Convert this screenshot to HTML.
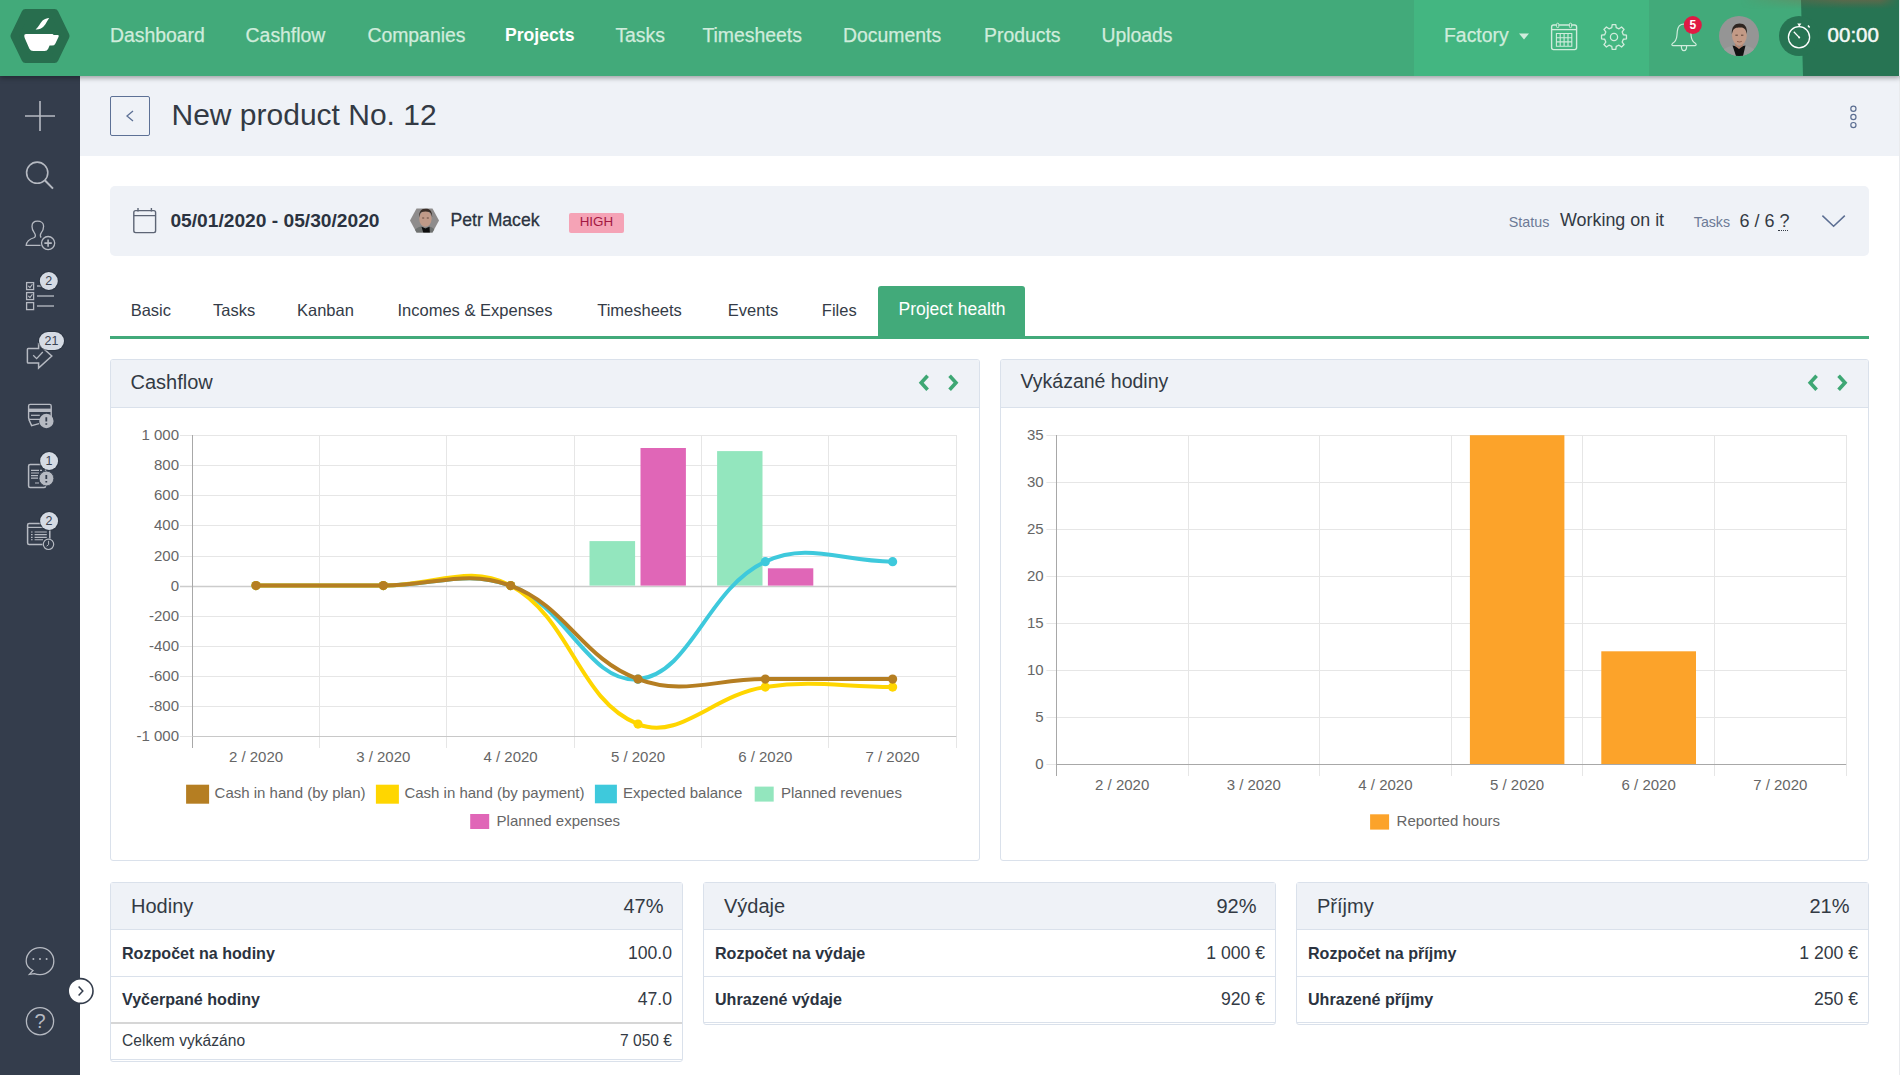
<!DOCTYPE html>
<html><head><meta charset="utf-8"><title>New product No. 12</title>
<style>
*{margin:0;padding:0;box-sizing:border-box}
html,body{width:1900px;height:1075px;overflow:hidden;background:#fff}
body{position:relative;font-family:"Liberation Sans", sans-serif}
.t{position:absolute;white-space:nowrap;line-height:1}
svg{display:block}
</style></head><body>
<div style="position:absolute;left:80px;top:76px;width:1820px;height:80px;background:#eff2f7"></div>
<div style="position:absolute;left:1899px;top:76px;width:1px;height:999px;background:#e9ebee"></div>
<div style="position:absolute;left:0px;top:76px;width:80px;height:999px;background:#343d4c"></div>
<svg style="position:absolute;left:0px;top:0px;" width="80" height="1075" viewBox="0 0 80 1075"><path d="M25,116H55M40,101V131" stroke="#b6bac2" stroke-width="1.6" fill="none"/><circle cx="37.2" cy="172.7" r="10.6" stroke="#b6bac2" stroke-width="1.6" fill="none"/><path d="M44.8,180.3L53,188.6" stroke="#b6bac2" stroke-width="2" fill="none"/><path d="M40.5,245.3H26.2C26.5,241 29.5,239 34.5,237.5C35.5,236.5 35.4,234.2 34.2,232.6C32.6,230.6 32,228.8 32,226.5C32,223 34.5,221.2 37.5,221.2C40.8,221.2 43.6,223 43.6,226.2C43.6,228.5 43,230.6 41.2,232.8C40.3,234 40.3,236.3 41,237.6" stroke="#b6bac2" stroke-width="1.3" fill="none"/><circle cx="48.1" cy="243.1" r="6.6" stroke="#b6bac2" stroke-width="1.3" fill="none"/><path d="M44.4,243.1H51.8M48.1,239.4V246.8" stroke="#b6bac2" stroke-width="1.6"/><rect x="26.6" y="282.6" width="7" height="7" stroke="#b6bac2" stroke-width="1.3" fill="none"/><rect x="26.6" y="292.6" width="7" height="7" stroke="#b6bac2" stroke-width="1.3" fill="none"/><rect x="26.6" y="302.6" width="7" height="7" stroke="#b6bac2" stroke-width="1.3" fill="none"/><path d="M28.3,285.8L30,287.6L32.4,284.3M28.3,295.8L30,297.6L32.4,294.3" stroke="#b6bac2" stroke-width="1.1" fill="none"/><path d="M37,286H54M37,296H54M37,306H54" stroke="#8a909a" stroke-width="1.8"/><path d="M38.6,344.2V348.6H28.2Q27.4,348.6 27.4,349.4V362.3Q27.4,363.1 28.2,363.1H38.6V368L51.8,356Z" stroke="#b6bac2" stroke-width="1.5" fill="none" stroke-linejoin="miter"/><path d="M33.2,355.3L36.6,358.6L42.8,352" stroke="#b6bac2" stroke-width="1.3" fill="none"/><rect x="28.6" y="404.4" width="22.6" height="15" rx="1.5" stroke="#b6bac2" stroke-width="1.4" fill="none"/><rect x="29" y="408.6" width="22" height="3.4" fill="#b6bac2"/><path d="M31,415.3H39.8" stroke="#b6bac2" stroke-width="1.2"/><path d="M28.8,419.4L31.6,425.6L39,423.6" stroke="#b6bac2" stroke-width="1.4" fill="none"/><circle cx="46.4" cy="421" r="7.2" fill="#b6bac2"/><path d="M46.3,417.3V421.4M46.3,423.2V424.8" stroke="#343d4c" stroke-width="1.8"/><rect x="28.6" y="464.6" width="17" height="23" rx="1.5" stroke="#b6bac2" stroke-width="1.5" fill="none"/><path d="M31,470.4H39M40,470.4H42M31,473H39M31,475.6H38M31,478.2H38M35,483H39" stroke="#b6bac2" stroke-width="1.2"/><circle cx="46.4" cy="478.5" r="7.4" fill="#b6bac2" stroke="#343d4c" stroke-width="0.8"/><path d="M46.3,475V479M46.3,481V482.6" stroke="#343d4c" stroke-width="1.8"/><rect x="27.6" y="523.6" width="22.2" height="21" rx="1.5" stroke="#b6bac2" stroke-width="1.5" fill="none"/><path d="M27.6,527.4H49.8" stroke="#b6bac2" stroke-width="1.2"/><path d="M31,532H32.6M34.6,532H46.8M31,534.6H32.6M34.6,534.6H46.8M31,537.4H32.6M34.6,537.4H46.8M31,539.8H32.6M34.6,539.8H43" stroke="#b6bac2" stroke-width="1.1"/><circle cx="48.5" cy="544.3" r="6" fill="#343d4c"/><circle cx="48.5" cy="544.3" r="5.2" stroke="#b6bac2" stroke-width="1.2" fill="none"/><path d="M48.6,540.8V544.6L46.6,546.2" stroke="#b6bac2" stroke-width="1" fill="none"/><circle cx="48.8" cy="281" r="10" fill="#262e3a" opacity="0.6"/><circle cx="48.8" cy="281" r="9" fill="#d5dbe4"/><text x="48.8" y="285.3" font-family="Liberation Sans" font-size="12.5" fill="#3a4250" text-anchor="middle">2</text><rect x="38.0" y="331" width="27.0" height="20" rx="10" fill="#262e3a" opacity="0.6"/><rect x="39.0" y="332" width="25.0" height="18" rx="9" fill="#d5dbe4"/><text x="51.5" y="345.3" font-family="Liberation Sans" font-size="12.5" fill="#3a4250" text-anchor="middle">21</text><circle cx="49.1" cy="461" r="10" fill="#262e3a" opacity="0.6"/><circle cx="49.1" cy="461" r="9" fill="#d5dbe4"/><text x="49.1" y="465.3" font-family="Liberation Sans" font-size="12.5" fill="#3a4250" text-anchor="middle">1</text><circle cx="49.1" cy="521" r="10" fill="#262e3a" opacity="0.6"/><circle cx="49.1" cy="521" r="9" fill="#d5dbe4"/><text x="49.1" y="525.3" font-family="Liberation Sans" font-size="12.5" fill="#3a4250" text-anchor="middle">2</text><path d="M33,970.5C29,968.5 26.2,965.2 26.2,961.2C26.2,953.6 32.4,947.6 40,947.6C47.6,947.6 53.8,953.6 53.8,961.2C53.8,968.8 47.6,974.6 40,974.6C38,974.6 36,974.3 34.3,973.6L29.5,974.3L33,970.5Z" stroke="#b6bac2" stroke-width="1.3" fill="none"/><circle cx="33.4" cy="959" r="1" fill="#b6bac2"/><circle cx="40" cy="959" r="1" fill="#b6bac2"/><circle cx="46.6" cy="959" r="1" fill="#b6bac2"/><circle cx="40" cy="1021.2" r="13.6" stroke="#b6bac2" stroke-width="1.3" fill="none"/></svg>
<div class="t" style="left:40px;top:1011.00px;font-size:20px;color:#b6bac2;font-weight:400;transform:translateX(-50%)">?</div>
<svg style="position:absolute;left:66px;top:976px;" width="30" height="30" viewBox="0 0 30 30"><circle cx="14.6" cy="15" r="12.4" fill="#fff" stroke="#343d4c" stroke-width="1.6"/><path d="M12.6,10.6L16.8,15L12.6,19.4" stroke="#343d4c" stroke-width="1.5" fill="none"/></svg>
<div style="position:absolute;left:0px;top:0px;width:1900px;height:76px;background:#42aa7a;box-shadow:0 2px 5px rgba(0,0,0,0.35)"></div>
<div style="position:absolute;left:1414px;top:0px;width:235px;height:76px;background:#43b681"></div>
<svg style="position:absolute;left:1770px;top:0px;" width="130" height="76" viewBox="0 0 130 76"><path d="M31,0H129V76H33Z" fill="#277453"/><circle cx="29" cy="36" r="20" fill="#277453"/></svg>
<div style="position:absolute;left:1740px;top:0px;width:159px;height:9px;background:linear-gradient(to bottom, rgba(160,90,65,0.42), rgba(160,90,65,0));-webkit-mask-image:linear-gradient(to right, transparent 0%, rgba(0,0,0,0.5) 35%, #000 65%, #000 88%, transparent 100%)"></div>
<div style="position:absolute;left:1899px;top:0px;width:1px;height:76px;background:#e9ebee"></div>
<svg style="position:absolute;left:0px;top:0px;" width="80" height="76" viewBox="0 0 80 76"><path d="M14.44,36L25.5,13H54.5L65.56,36L54.5,59H25.5Z" fill="#286e4e" stroke="#286e4e" stroke-width="8" stroke-linejoin="round"/><path d="M24.3,35.6Q24.1,34 26,34H52.2Q53.2,34 53.6,35H57.8Q59.4,35.2 58.6,36.8L55.4,43.4Q54.4,45.6 52,45.6H49.6L48.2,48.8Q47.2,51 44.6,51H33.2Q30.6,51 29.4,48.8L24.8,38.2Q24.2,37 24.3,35.6Z" fill="#fff"/><path d="M35.6,29.4C38.4,27.6 40,23 42.6,20.6C44.6,18.7 47,17.9 49.2,17.9C47.6,19.6 46.4,23.6 43.6,26.6C41.6,28.7 38.6,29.6 35.6,29.4Z" fill="#fff"/></svg>
<div class="t" style="left:110px;top:25.91px;font-size:19.4px;color:#d0ecdc;font-weight:400;-webkit-text-stroke:0.25px #d0ecdc">Dashboard</div>
<div class="t" style="left:245.6px;top:25.91px;font-size:19.4px;color:#d0ecdc;font-weight:400;-webkit-text-stroke:0.25px #d0ecdc">Cashflow</div>
<div class="t" style="left:367.4px;top:25.91px;font-size:19.4px;color:#d0ecdc;font-weight:400;-webkit-text-stroke:0.25px #d0ecdc">Companies</div>
<div class="t" style="left:505px;top:27.44px;font-size:17.6px;color:#fff;font-weight:700;">Projects</div>
<div class="t" style="left:615.4px;top:25.91px;font-size:19.4px;color:#d0ecdc;font-weight:400;-webkit-text-stroke:0.25px #d0ecdc">Tasks</div>
<div class="t" style="left:702.4px;top:25.91px;font-size:19.4px;color:#d0ecdc;font-weight:400;-webkit-text-stroke:0.25px #d0ecdc">Timesheets</div>
<div class="t" style="left:843px;top:25.91px;font-size:19.4px;color:#d0ecdc;font-weight:400;-webkit-text-stroke:0.25px #d0ecdc">Documents</div>
<div class="t" style="left:984px;top:25.91px;font-size:19.4px;color:#d0ecdc;font-weight:400;-webkit-text-stroke:0.25px #d0ecdc">Products</div>
<div class="t" style="left:1101.4px;top:25.91px;font-size:19.4px;color:#d0ecdc;font-weight:400;-webkit-text-stroke:0.25px #d0ecdc">Uploads</div>
<div class="t" style="left:1444px;top:25.91px;font-size:19.4px;color:#d0ecdc;font-weight:400;-webkit-text-stroke:0.25px #d0ecdc">Factory</div>
<svg style="position:absolute;left:1515px;top:30px;" width="18" height="14" viewBox="0 0 18 14"><path d="M4,3.5H14L9,9.6Z" fill="#d0ecdc"/></svg>
<svg style="position:absolute;left:1548px;top:20px;" width="32" height="32" viewBox="0 0 32 32"><rect x="3.6" y="5" width="25" height="24.6" rx="2" stroke="#d0ecdc" stroke-width="1.4" fill="none"/><path d="M3.6,9.6H28.6" stroke="#d0ecdc" stroke-width="1.3"/><rect x="8.6" y="3.2" width="2.2" height="4.4" rx="1" stroke="#d0ecdc" stroke-width="1" fill="#43b681"/><rect x="21.4" y="3.2" width="2.2" height="4.4" rx="1" stroke="#d0ecdc" stroke-width="1" fill="#43b681"/><path d="M8.4,13.5H23.8V26.2H8.4ZM8.4,17.7H23.8M8.4,21.9H23.8M12.2,13.5V26.2M16.1,13.5V26.2M20,13.5V26.2" stroke="#d0ecdc" stroke-width="1.1" fill="none"/></svg>
<svg style="position:absolute;left:1598px;top:21px;" width="32" height="32" viewBox="0 0 32 32"><path d="M13.76,6.67L14.22,3.53L17.78,3.53L18.24,6.67L21.02,7.81L23.57,5.92L26.08,8.43L24.19,10.98L25.33,13.76L28.47,14.22L28.47,17.78L25.33,18.24L24.19,21.02L26.08,23.57L23.57,26.08L21.02,24.19L18.24,25.33L17.78,28.47L14.22,28.47L13.76,25.33L10.98,24.19L8.43,26.08L5.92,23.57L7.81,21.02L6.67,18.24L3.53,17.78L3.53,14.22L6.67,13.76L7.81,10.98L5.92,8.43L8.43,5.92L10.98,7.81Z" stroke="#d0ecdc" stroke-width="1.3" fill="none" stroke-linejoin="round"/><circle cx="16" cy="16" r="3.6" stroke="#d0ecdc" stroke-width="1.3" fill="none"/></svg>
<svg style="position:absolute;left:1666px;top:16px;" width="40" height="40" viewBox="0 0 40 40"><path d="M6.4,27.6C9.2,26 10.6,23.6 10.9,19.8L11.3,15.2C11.7,10.8 14.4,8.2 18,8C21.6,8.2 24.3,10.8 24.7,15.2L25.1,19.8C25.4,23.6 26.8,26 29.6,27.6Q31,29.2 29,29.6H7Q5,29.2 6.4,27.6Z" stroke="#d0ecdc" stroke-width="1.2" fill="none"/><path d="M15.4,29.8Q15.2,34.6 18,34.6Q20.8,34.6 20.6,29.8" stroke="#d0ecdc" stroke-width="1.2" fill="none"/><circle cx="26.8" cy="9" r="9" fill="#e01a44"/><text x="26.8" y="13.2" font-family="Liberation Sans" font-size="12" font-weight="700" fill="#fff" text-anchor="middle">5</text></svg>
<svg style="position:absolute;left:1719px;top:16px;" width="40" height="40" viewBox="0 0 40 40"><defs><clipPath id="av"><circle cx="20" cy="20" r="20"/></clipPath></defs><g clip-path="url(#av)"><rect width="40" height="40" fill="#959595"/><path d="M0,40C2,34 7,31 13.5,29.5L20,32L26.5,29.5C33,31 38,34 40,40Z" fill="#9c9c9c"/><path d="M13.5,29.5L17,40H24L26.5,29.5L20,31Z" fill="#111"/><path d="M16,27L20,31L24.5,27L24,30L20,33L16,30Z" fill="#b28470"/><ellipse cx="20.4" cy="19.6" rx="7.4" ry="9.8" fill="#c39a86"/><path d="M12.8,18C12.4,10.6 16,7.6 20.6,7.6C25.4,7.6 28.4,10.6 28,18L27,15C26,12 24,11.4 20.6,11.4C17,11.4 14.8,12 13.8,15Z" fill="#2e2520"/><path d="M16.4,19.2H18.8M22,19.2H24.4" stroke="#5a4036" stroke-width="1"/><path d="M18,25.4Q20.4,26.6 22.8,25.4" stroke="#8a5a4a" stroke-width="0.9" fill="none"/></g></svg>
<svg style="position:absolute;left:1784px;top:20px;" width="30" height="32" viewBox="0 0 30 32"><circle cx="15" cy="17.2" r="10.6" stroke="#fff" stroke-width="1.3" fill="none"/><path d="M13.2,3.6H17.4L15.3,6.4Z" fill="#fff"/><path d="M15.3,5.4V6.6M24,5.6L25.6,7.4" stroke="#fff" stroke-width="1.5"/><path d="M9.8,11.8L15.2,17.4" stroke="#fff" stroke-width="1.3"/><circle cx="15.2" cy="17.4" r="1" fill="#fff"/></svg>
<div class="t" style="left:1827.6px;top:24.57px;font-size:20.5px;color:#f4f8f6;font-weight:400;-webkit-text-stroke:0.5px #f4f8f6">00:00</div>
<div style="position:absolute;left:110px;top:96px;width:40px;height:40px;border:1px solid #5d7196;border-radius:2px"></div>
<svg style="position:absolute;left:120px;top:106px;" width="20" height="20" viewBox="0 0 20 20"><path d="M13,5L7,10L13,15" stroke="#5d7196" stroke-width="1.3" fill="none"/></svg>
<div class="t" style="left:171.5px;top:99.50px;font-size:30px;color:#333a44;font-weight:400;">New product No. 12</div>
<svg style="position:absolute;left:1843px;top:100px;" width="20" height="32" viewBox="0 0 20 32"><circle cx="10.4" cy="8.8" r="2.6" stroke="#5b6e92" stroke-width="1.2" fill="none"/><circle cx="10.4" cy="17" r="2.6" stroke="#5b6e92" stroke-width="1.2" fill="none"/><circle cx="10.4" cy="25.1" r="2.6" stroke="#5b6e92" stroke-width="1.2" fill="none"/></svg>
<div style="position:absolute;left:110px;top:186px;width:1759px;height:70px;background:#eff2f7;border-radius:5px"></div>
<svg style="position:absolute;left:130px;top:205px;" width="30" height="32" viewBox="0 0 30 32"><rect x="3.8" y="5.6" width="21.8" height="22" rx="1.8" stroke="#5d6575" stroke-width="1.4" fill="none"/><path d="M3.8,10.6H25.6M8,3V6.6M21.4,3V6.6" stroke="#5d6575" stroke-width="1.4"/></svg>
<div class="t" style="left:170.4px;top:210.68px;font-size:19.2px;color:#2b3340;font-weight:700;">05/01/2020 - 05/30/2020</div>
<svg style="position:absolute;left:409px;top:207px;" width="32" height="28" viewBox="0 0 32 28"><defs><clipPath id="hx"><path d="M1,13.5L7.5,1.5H23.5L30,13.5L23.5,25.5H7.5Z"/></clipPath></defs><g clip-path="url(#hx)"><rect width="32" height="28" fill="#8e8c8c"/><path d="M2,28C4,23 8,20.5 12,19.5L16,21L20,19.5C24,20.5 28,23 30,28Z" fill="#6f7271"/><path d="M12.5,19.8L15,28H21L20.5,19.8L16.5,21.5Z" fill="#0e0e0e"/><ellipse cx="16.4" cy="11.8" rx="6.2" ry="8" fill="#c09a88"/><path d="M10,10.4C9.8,4.4 12.6,1.6 16.6,1.6C20.6,1.6 23.4,4.2 23.2,10.4L22.4,7.4C21.6,5 19.6,4.4 16.6,4.4C13.4,4.4 11.6,5 10.8,7.4Z" fill="#3a2e28"/><path d="M13.2,11H15.2M17.8,11H19.8" stroke="#5a4036" stroke-width="0.9"/></g></svg>
<div class="t" style="left:450.5px;top:211.64px;font-size:17.6px;color:#2b3340;font-weight:400;-webkit-text-stroke:0.3px #2b3340">Petr Macek</div>
<div style="position:absolute;left:569px;top:213px;width:55px;height:20px;background:#f5a3b6;border-radius:2px"></div>
<div class="t" style="left:596.4px;top:215.21px;font-size:13.4px;color:#a31843;font-weight:400;transform:translateX(-50%)">HIGH</div>
<div class="t" style="left:1508.8px;top:214.65px;font-size:14.3px;color:#6c7a96;font-weight:400;">Status</div>
<div class="t" style="left:1560px;top:212.38px;font-size:17.9px;color:#333a44;font-weight:400;">Working on it</div>
<div class="t" style="left:1693.8px;top:214.73px;font-size:14.2px;color:#6c7a96;font-weight:400;">Tasks</div>
<div class="t" style="left:1739.5px;top:211.90px;font-size:18px;color:#333a44;font-weight:400;">6 / 6 ?</div>
<div style="position:absolute;left:1778px;top:229.5px;width:10px;height:1px;border-bottom:1px dotted #333a44"></div>
<svg style="position:absolute;left:1818px;top:210px;" width="32" height="20" viewBox="0 0 32 20"><path d="M4.4,5.6L15.6,16.2L26.8,5.6" stroke="#5b6e92" stroke-width="1.5" fill="none"/></svg>
<div style="position:absolute;left:110px;top:336px;width:1759px;height:3px;background:#42aa7a"></div>
<div style="position:absolute;left:878px;top:286px;width:147px;height:51px;background:#42aa7a;border-radius:3px 3px 0 0"></div>
<div class="t" style="left:130.7px;top:301.98px;font-size:16.5px;color:#343b47;font-weight:400;">Basic</div>
<div class="t" style="left:213px;top:301.98px;font-size:16.5px;color:#343b47;font-weight:400;">Tasks</div>
<div class="t" style="left:297px;top:301.98px;font-size:16.5px;color:#343b47;font-weight:400;">Kanban</div>
<div class="t" style="left:397.5px;top:301.98px;font-size:16.5px;color:#343b47;font-weight:400;">Incomes &amp; Expenses</div>
<div class="t" style="left:597.2px;top:301.98px;font-size:16.5px;color:#343b47;font-weight:400;">Timesheets</div>
<div class="t" style="left:727.8px;top:301.98px;font-size:16.5px;color:#343b47;font-weight:400;">Events</div>
<div class="t" style="left:821.8px;top:301.98px;font-size:16.5px;color:#343b47;font-weight:400;">Files</div>
<div class="t" style="left:898.5px;top:301.12px;font-size:17.5px;color:#fff;font-weight:400;">Project health</div>
<div style="position:absolute;left:110px;top:359px;width:870px;height:502px;border:1px solid #dae1eb;border-radius:3px;background:#fff"></div>
<div style="position:absolute;left:111px;top:360px;width:868px;height:48px;background:#eff2f7;border-bottom:1px solid #dae1eb;border-radius:2px 2px 0 0"></div>
<div class="t" style="left:130.5px;top:372.00px;font-size:20px;color:#333a44;font-weight:400;">Cashflow</div>
<svg style="position:absolute;left:910px;top:371px;" width="60" height="26" viewBox="0 0 60 26"><path d="M17.6,4.8L11.2,11.8L17.6,18.8" stroke="#3ea774" stroke-width="3.6" fill="none"/><path d="M39.6,4.8L46,11.8L39.6,18.8" stroke="#3ea774" stroke-width="3.6" fill="none"/></svg>
<div style="position:absolute;left:1000px;top:359px;width:869px;height:502px;border:1px solid #dae1eb;border-radius:3px;background:#fff"></div>
<div style="position:absolute;left:1001px;top:360px;width:867px;height:48px;background:#eff2f7;border-bottom:1px solid #dae1eb;border-radius:2px 2px 0 0"></div>
<div class="t" style="left:1020.5px;top:372.43px;font-size:19.5px;color:#333a44;font-weight:400;">Vykázané hodiny</div>
<svg style="position:absolute;left:1799px;top:371px;" width="60" height="26" viewBox="0 0 60 26"><path d="M17.6,4.8L11.2,11.8L17.6,18.8" stroke="#3ea774" stroke-width="3.6" fill="none"/><path d="M39.6,4.8L46,11.8L39.6,18.8" stroke="#3ea774" stroke-width="3.6" fill="none"/></svg>
<svg style="position:absolute;left:0px;top:0px;overflow:visible" width="1000" height="870" viewBox="0 0 1000 870"><path d="M192.5,435 V748" stroke="#e6e6e6" stroke-width="1"/><path d="M319.5,435 V748" stroke="#e6e6e6" stroke-width="1"/><path d="M446.5,435 V748" stroke="#e6e6e6" stroke-width="1"/><path d="M574.5,435 V748" stroke="#e6e6e6" stroke-width="1"/><path d="M701.5,435 V748" stroke="#e6e6e6" stroke-width="1"/><path d="M828.5,435 V748" stroke="#e6e6e6" stroke-width="1"/><path d="M956.5,435 V748" stroke="#e6e6e6" stroke-width="1"/><path d="M180,736.5 H956.3" stroke="#e6e6e6" stroke-width="1"/><text x="179" y="740.7" font-family="Liberation Sans" font-size="15" fill="#666" text-anchor="end">-1 000</text><path d="M180,706.5 H956.3" stroke="#e6e6e6" stroke-width="1"/><text x="179" y="710.7" font-family="Liberation Sans" font-size="15" fill="#666" text-anchor="end">-800</text><path d="M180,676.5 H956.3" stroke="#e6e6e6" stroke-width="1"/><text x="179" y="680.7" font-family="Liberation Sans" font-size="15" fill="#666" text-anchor="end">-600</text><path d="M180,646.5 H956.3" stroke="#e6e6e6" stroke-width="1"/><text x="179" y="650.7" font-family="Liberation Sans" font-size="15" fill="#666" text-anchor="end">-400</text><path d="M180,616.5 H956.3" stroke="#e6e6e6" stroke-width="1"/><text x="179" y="620.7" font-family="Liberation Sans" font-size="15" fill="#666" text-anchor="end">-200</text><path d="M180,586.5 H956.3" stroke="#cccccc" stroke-width="1.6"/><text x="179" y="590.7" font-family="Liberation Sans" font-size="15" fill="#666" text-anchor="end">0</text><path d="M180,556.5 H956.3" stroke="#e6e6e6" stroke-width="1"/><text x="179" y="560.7" font-family="Liberation Sans" font-size="15" fill="#666" text-anchor="end">200</text><path d="M180,525.5 H956.3" stroke="#e6e6e6" stroke-width="1"/><text x="179" y="529.7" font-family="Liberation Sans" font-size="15" fill="#666" text-anchor="end">400</text><path d="M180,495.5 H956.3" stroke="#e6e6e6" stroke-width="1"/><text x="179" y="499.7" font-family="Liberation Sans" font-size="15" fill="#666" text-anchor="end">600</text><path d="M180,465.5 H956.3" stroke="#e6e6e6" stroke-width="1"/><text x="179" y="469.7" font-family="Liberation Sans" font-size="15" fill="#666" text-anchor="end">800</text><path d="M180,435.5 H956.3" stroke="#e6e6e6" stroke-width="1"/><text x="179" y="439.7" font-family="Liberation Sans" font-size="15" fill="#666" text-anchor="end">1 000</text><path d="M192.5,435 V748" stroke="#a8a8a8" stroke-width="1"/><path d="M192.3,736.5 H956.3" stroke="#c8c8c8" stroke-width="1"/><text x="256.0" y="762" font-family="Liberation Sans" font-size="15" fill="#666" text-anchor="middle">2 / 2020</text><text x="383.3" y="762" font-family="Liberation Sans" font-size="15" fill="#666" text-anchor="middle">3 / 2020</text><text x="510.6" y="762" font-family="Liberation Sans" font-size="15" fill="#666" text-anchor="middle">4 / 2020</text><text x="638.0" y="762" font-family="Liberation Sans" font-size="15" fill="#666" text-anchor="middle">5 / 2020</text><text x="765.3" y="762" font-family="Liberation Sans" font-size="15" fill="#666" text-anchor="middle">6 / 2020</text><text x="892.6" y="762" font-family="Liberation Sans" font-size="15" fill="#666" text-anchor="middle">7 / 2020</text><rect x="589.5" y="541.1" width="45.60000000000002" height="44.5" fill="#93e6be"/><rect x="640.5" y="448.0" width="45.39999999999998" height="137.6" fill="#e066b7"/><rect x="717.1" y="451.1" width="45.39999999999998" height="134.5" fill="#93e6be"/><rect x="767.9" y="568.3" width="45.39999999999998" height="17.3" fill="#e066b7"/><path d="M255.97,585.60 C306.90,585.60 332.37,585.60 383.30,585.60 C434.23,585.60 465.18,568.89 510.63,585.60 C567.05,606.34 589.38,683.78 637.97,679.21 C691.24,674.20 706.58,588.77 765.30,561.67 C808.45,541.76 841.70,561.67 892.63,561.67" stroke="#3ec9dc" stroke-width="4" fill="none" stroke-linejoin="round" stroke-linecap="round"/><circle cx="255.97" cy="585.60" r="4.6" fill="#3ec9dc"/><circle cx="383.30" cy="585.60" r="4.6" fill="#3ec9dc"/><circle cx="510.63" cy="585.60" r="4.6" fill="#3ec9dc"/><circle cx="637.97" cy="679.21" r="4.6" fill="#3ec9dc"/><circle cx="765.30" cy="561.67" r="4.6" fill="#3ec9dc"/><circle cx="892.63" cy="561.67" r="4.6" fill="#3ec9dc"/><path d="M255.97,585.60 C306.90,585.60 332.37,585.60 383.30,585.60 C434.23,585.60 469.51,563.24 510.63,585.60 C571.38,618.63 578.22,700.26 637.97,724.06 C680.09,740.84 713.33,694.59 765.30,687.04 C815.20,679.78 841.70,687.04 892.63,687.04" stroke="#ffd600" stroke-width="4" fill="none" stroke-linejoin="round" stroke-linecap="round"/><circle cx="255.97" cy="585.60" r="4.6" fill="#ffd600"/><circle cx="383.30" cy="585.60" r="4.6" fill="#ffd600"/><circle cx="510.63" cy="585.60" r="4.6" fill="#ffd600"/><circle cx="637.97" cy="724.06" r="4.6" fill="#ffd600"/><circle cx="765.30" cy="687.04" r="4.6" fill="#ffd600"/><circle cx="892.63" cy="687.04" r="4.6" fill="#ffd600"/><path d="M255.97,585.60 C306.90,585.60 332.37,585.60 383.30,585.60 C434.23,585.60 465.17,568.91 510.63,585.60 C567.03,606.30 581.57,658.36 637.97,679.06 C683.43,695.75 714.37,679.06 765.30,679.06 C816.23,679.06 841.70,679.06 892.63,679.06" stroke="#b57e22" stroke-width="4" fill="none" stroke-linejoin="round" stroke-linecap="round"/><circle cx="255.97" cy="585.60" r="4.6" fill="#b57e22"/><circle cx="383.30" cy="585.60" r="4.6" fill="#b57e22"/><circle cx="510.63" cy="585.60" r="4.6" fill="#b57e22"/><circle cx="637.97" cy="679.06" r="4.6" fill="#b57e22"/><circle cx="765.30" cy="679.06" r="4.6" fill="#b57e22"/><circle cx="892.63" cy="679.06" r="4.6" fill="#b57e22"/><rect x="186.1" y="784.7" width="23" height="19" fill="#b57e22"/><text x="214.6" y="798.2" font-family="Liberation Sans" font-size="15" fill="#666">Cash in hand (by plan)</text><rect x="375.9" y="784.7" width="23" height="19" fill="#ffd600"/><text x="404.4" y="798.2" font-family="Liberation Sans" font-size="15" fill="#666">Cash in hand (by payment)</text><rect x="594.9" y="784.7" width="22" height="18.6" fill="#3ec9dc"/><text x="623" y="798.2" font-family="Liberation Sans" font-size="15" fill="#666">Expected balance</text><rect x="754.7" y="786.6" width="19" height="15" fill="#93e6be"/><text x="781" y="798.2" font-family="Liberation Sans" font-size="15" fill="#666">Planned revenues</text><rect x="470.2" y="814" width="19" height="15" fill="#e066b7"/><text x="496.6" y="826.2" font-family="Liberation Sans" font-size="15" fill="#666">Planned expenses</text></svg>
<svg style="position:absolute;left:0px;top:0px;overflow:visible" width="1900" height="870" viewBox="0 0 1900 870"><path d="M1056.5,435 V776" stroke="#e6e6e6" stroke-width="1"/><path d="M1188.5,435 V776" stroke="#e6e6e6" stroke-width="1"/><path d="M1319.5,435 V776" stroke="#e6e6e6" stroke-width="1"/><path d="M1451.5,435 V776" stroke="#e6e6e6" stroke-width="1"/><path d="M1582.5,435 V776" stroke="#e6e6e6" stroke-width="1"/><path d="M1714.5,435 V776" stroke="#e6e6e6" stroke-width="1"/><path d="M1846.5,435 V776" stroke="#e6e6e6" stroke-width="1"/><path d="M1046.4,764.5 H1846.1" stroke="#e6e6e6" stroke-width="1"/><text x="1043.6" y="769.1" font-family="Liberation Sans" font-size="15" fill="#666" text-anchor="end">0</text><path d="M1046.4,717.5 H1846.1" stroke="#e6e6e6" stroke-width="1"/><text x="1043.6" y="722.1" font-family="Liberation Sans" font-size="15" fill="#666" text-anchor="end">5</text><path d="M1046.4,670.5 H1846.1" stroke="#e6e6e6" stroke-width="1"/><text x="1043.6" y="675.1" font-family="Liberation Sans" font-size="15" fill="#666" text-anchor="end">10</text><path d="M1046.4,623.5 H1846.1" stroke="#e6e6e6" stroke-width="1"/><text x="1043.6" y="628.1" font-family="Liberation Sans" font-size="15" fill="#666" text-anchor="end">15</text><path d="M1046.4,576.5 H1846.1" stroke="#e6e6e6" stroke-width="1"/><text x="1043.6" y="581.1" font-family="Liberation Sans" font-size="15" fill="#666" text-anchor="end">20</text><path d="M1046.4,529.5 H1846.1" stroke="#e6e6e6" stroke-width="1"/><text x="1043.6" y="534.1" font-family="Liberation Sans" font-size="15" fill="#666" text-anchor="end">25</text><path d="M1046.4,482.5 H1846.1" stroke="#e6e6e6" stroke-width="1"/><text x="1043.6" y="487.1" font-family="Liberation Sans" font-size="15" fill="#666" text-anchor="end">30</text><path d="M1046.4,435.5 H1846.1" stroke="#e6e6e6" stroke-width="1"/><text x="1043.6" y="440.1" font-family="Liberation Sans" font-size="15" fill="#666" text-anchor="end">35</text><path d="M1056.5,435 V776" stroke="#a8a8a8" stroke-width="1"/><path d="M1056.4,764.5 H1846.1" stroke="#a8a8a8" stroke-width="1"/><text x="1122.2" y="790.4" font-family="Liberation Sans" font-size="15" fill="#666" text-anchor="middle">2 / 2020</text><text x="1253.8" y="790.4" font-family="Liberation Sans" font-size="15" fill="#666" text-anchor="middle">3 / 2020</text><text x="1385.4" y="790.4" font-family="Liberation Sans" font-size="15" fill="#666" text-anchor="middle">4 / 2020</text><text x="1517.1" y="790.4" font-family="Liberation Sans" font-size="15" fill="#666" text-anchor="middle">5 / 2020</text><text x="1648.7" y="790.4" font-family="Liberation Sans" font-size="15" fill="#666" text-anchor="middle">6 / 2020</text><text x="1780.3" y="790.4" font-family="Liberation Sans" font-size="15" fill="#666" text-anchor="middle">7 / 2020</text><rect x="1469.9" y="435.2" width="94.5" height="328.8" fill="#fca32a"/><rect x="1601.3" y="651.3" width="94.7" height="112.7" fill="#fca32a"/><rect x="1370.1" y="814.3" width="19" height="15.3" fill="#fca32a"/><text x="1396.6" y="825.8" font-family="Liberation Sans" font-size="15" fill="#666">Reported hours</text></svg>
<div style="position:absolute;left:110px;top:882px;width:573px;height:180px;border:1px solid #dae1eb;border-radius:3px;background:#fff"></div>
<div style="position:absolute;left:111px;top:883px;width:571px;height:47px;background:#eff2f7;border-bottom:1px solid #dae1eb"></div>
<div class="t" style="left:131px;top:896.20px;font-size:20px;color:#333a44;font-weight:400;">Hodiny</div>
<div class="t" style="right:1236.5px;top:896.20px;font-size:20px;color:#333a44;font-weight:400;">47%</div>
<div class="t" style="left:122px;top:945.22px;font-size:16.1px;color:#2b3340;font-weight:700;">Rozpočet na hodiny</div>
<div class="t" style="right:1228px;top:944.74px;font-size:17.6px;color:#333a44;font-weight:400;">100.0</div>
<div class="t" style="left:122px;top:991.22px;font-size:16.1px;color:#2b3340;font-weight:700;">Vyčerpané hodiny</div>
<div class="t" style="right:1228px;top:990.74px;font-size:17.6px;color:#333a44;font-weight:400;">47.0</div>
<div style="position:absolute;left:111px;top:976px;width:571px;height:1px;background:#dae1eb"></div>
<div style="position:absolute;left:111px;top:1022px;width:571px;height:2px;background:#d6d6d6"></div>
<div class="t" style="left:122px;top:1032.54px;font-size:15.6px;color:#333a44;font-weight:400;">Celkem vykázáno</div>
<div class="t" style="right:1228px;top:1032.54px;font-size:15.6px;color:#333a44;font-weight:400;">7 050 €</div>
<div style="position:absolute;left:111px;top:1059px;width:571px;height:1px;background:#dae1eb"></div>
<div style="position:absolute;left:703px;top:882px;width:573px;height:143px;border:1px solid #dae1eb;border-radius:3px;background:#fff"></div>
<div style="position:absolute;left:704px;top:883px;width:571px;height:47px;background:#eff2f7;border-bottom:1px solid #dae1eb"></div>
<div class="t" style="left:724px;top:896.20px;font-size:20px;color:#333a44;font-weight:400;">Výdaje</div>
<div class="t" style="right:643.5px;top:896.20px;font-size:20px;color:#333a44;font-weight:400;">92%</div>
<div class="t" style="left:715px;top:945.22px;font-size:16.1px;color:#2b3340;font-weight:700;">Rozpočet na výdaje</div>
<div class="t" style="right:635px;top:944.74px;font-size:17.6px;color:#333a44;font-weight:400;">1 000 €</div>
<div class="t" style="left:715px;top:991.22px;font-size:16.1px;color:#2b3340;font-weight:700;">Uhrazené výdaje</div>
<div class="t" style="right:635px;top:990.74px;font-size:17.6px;color:#333a44;font-weight:400;">920 €</div>
<div style="position:absolute;left:704px;top:976px;width:571px;height:1px;background:#dae1eb"></div>
<div style="position:absolute;left:704px;top:1022px;width:571px;height:1px;background:#dae1eb"></div>
<div style="position:absolute;left:1296px;top:882px;width:573px;height:143px;border:1px solid #dae1eb;border-radius:3px;background:#fff"></div>
<div style="position:absolute;left:1297px;top:883px;width:571px;height:47px;background:#eff2f7;border-bottom:1px solid #dae1eb"></div>
<div class="t" style="left:1317px;top:896.20px;font-size:20px;color:#333a44;font-weight:400;">Příjmy</div>
<div class="t" style="right:50.5px;top:896.20px;font-size:20px;color:#333a44;font-weight:400;">21%</div>
<div class="t" style="left:1308px;top:945.22px;font-size:16.1px;color:#2b3340;font-weight:700;">Rozpočet na příjmy</div>
<div class="t" style="right:42px;top:944.74px;font-size:17.6px;color:#333a44;font-weight:400;">1 200 €</div>
<div class="t" style="left:1308px;top:991.22px;font-size:16.1px;color:#2b3340;font-weight:700;">Uhrazené příjmy</div>
<div class="t" style="right:42px;top:990.74px;font-size:17.6px;color:#333a44;font-weight:400;">250 €</div>
<div style="position:absolute;left:1297px;top:976px;width:571px;height:1px;background:#dae1eb"></div>
<div style="position:absolute;left:1297px;top:1022px;width:571px;height:1px;background:#dae1eb"></div>
</body></html>
